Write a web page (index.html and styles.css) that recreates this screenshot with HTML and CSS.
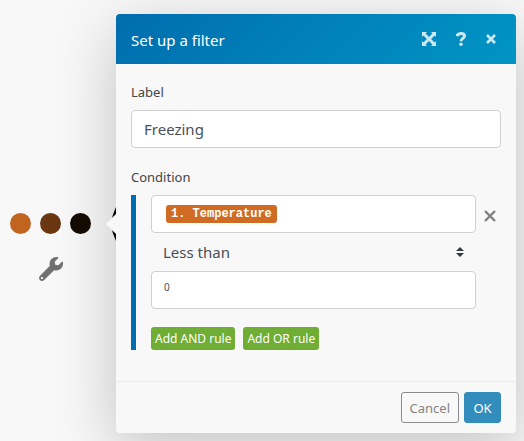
FILE: index.html
```html
<!DOCTYPE html>
<html lang="en">
<head>
<meta charset="utf-8">
<title>Set up a filter</title>
<link rel="stylesheet" href="styles.css">
</head>
<body>
<main class="scene">
  <div class="route">
    <div class="dots">
      <span class="dot dot-light"></span>
      <span class="dot dot-mid"></span>
      <span class="dot dot-dark"></span>
    </div>
    <svg class="wrench" viewBox="0 0 512 512" aria-hidden="true"><path d="M507.7 109.1c-2.2-9-13.5-12.1-20.1-5.5l-74.4 74.4-67.9-11.3-11.3-67.9 74.4-74.4c6.6-6.6 3.4-17.9-5.7-20.2-47.4-11.7-99.6.9-136.6 37.9-39.6 39.6-50.5 97.1-34.1 147.2L18.7 402.8c-25 25-25 65.5 0 90.5s65.5 25 90.5 0l213.2-213.2c50.1 16.7 107.5 5.7 147.4-34.2 37.1-37.1 49.7-89.3 37.9-136.8zM64 472c-13.3 0-24-10.700-24-24 0-13.300 10.700-24 24-24s24 10.700 24 24c0 13.300-10.700 24-24 24z"/></svg>
  </div>
  <form class="panel">
    <svg class="pointer" viewBox="0 0 10 36" aria-hidden="true"><path class="module" d="M10 1Q6 9 5 18Q6 27 10 35Z"/><path class="tip" d="M10 8L0 18L10 28Z"/></svg>
    <header class="head">
      <h1>Set up a filter</h1>
      <button type="button" class="tool" aria-label="Expand"><svg width="14" height="14" viewBox="0 0 14 14"><path d="M0 0H5L3.600 1.400L7 4.900L10.400 1.400L9 0H14V5L12.600 3.600L9.100 7L12.600 10.400L14 9V14H9L10.400 12.600L7 9.100L3.600 12.600L5 14H0V9L1.400 10.400L4.900 7L1.400 3.600L0 5Z"/></svg></button>
      <button type="button" class="tool" aria-label="Help"><svg width="10" height="14" viewBox="0 0 10 14"><path class="stroke thick" d="M1 4.200C1.500 2.200 3.200 1.500 5 1.500C7.300 1.500 8.500 2.700 8.500 4.100C8.500 6.500 5 6.300 5 9.200"/><circle cx="5" cy="12.200" r="1.800"/></svg></button>
      <button type="button" class="tool" aria-label="Close"><svg width="10" height="10" viewBox="0 0 10 10"><path class="stroke" d="M1 1L9 9M9 1L1 9"/></svg></button>
    </header>
    <div class="body">
      <label class="caption" for="name">Label</label>
      <input class="field" id="name" type="text" value="Freezing">
      <div class="caption caption-next" id="condition">Condition</div>
      <div class="rules" role="group" aria-labelledby="condition">
        <div class="rule">
          <div class="operands">
            <div class="field expression"><span class="pill">1. Temperature</span></div>
            <div class="choice">
              <select aria-label="Operator"><option>Less than</option></select>
              <svg class="arrows" width="8" height="10" viewBox="0 0 8 10" aria-hidden="true"><path d="M0 4L4 0L8 4ZM0 6H8L4 10Z"/></svg>
            </div>
            <textarea class="field value" rows="1" aria-label="Value">0</textarea>
          </div>
          <button type="button" class="remove" aria-label="Remove rule"><svg width="12" height="12" viewBox="0 0 12 12"><path d="M1 1L11 11M11 1L1 11"/></svg></button>
        </div>
        <div class="adders">
          <button type="button" class="add">Add AND rule</button>
          <button type="button" class="add">Add OR rule</button>
        </div>
      </div>
    </div>
    <footer class="foot">
      <button type="button" class="btn btn-cancel">Cancel</button>
      <button type="button" class="btn btn-ok">OK</button>
    </footer>
  </form>
</main>
</body>
</html>
```
FILE: styles.css
```css
* { box-sizing: border-box; }
body {
  margin: 0;
  overflow: hidden;
  background: #f8f8f8;
  color: #495057;
  font-family: "Segoe UI", "Noto Sans", "Open Sans", sans-serif;
}
button { margin: 0; font-family: inherit; cursor: pointer; }

.scene {
  display: flex;
  align-items: flex-start;
  min-height: 100vh;
  padding: 14px 8px 8px 10px;
}
.route { flex: 0 0 106px; padding-top: 199px; }
.dots { display: flex; gap: 9px; }
.dot { width: 21px; height: 21px; border-radius: 50%; }
.dot-light { background: #c06420; }
.dot-mid { background: #6b3712; }
.dot-dark { background: #140b02; }
.wrench { display: block; width: 24px; height: 24px; margin: 23px 0 0 29px; fill: #707070; }

.panel {
  position: relative;
  flex: 1;
  min-width: 0;
  border-radius: 4px;
  background: #f8f8f8;
  box-shadow: 0 16px 64px rgba(0, 0, 0, 0.22);
}
.pointer { position: absolute; left: -10px; top: 192px; width: 10px; height: 36px; }
.module { fill: #000; }
.tip { fill: #f8f8f8; }

.head {
  display: flex;
  align-items: center;
  height: 50px;
  padding: 0 20px 0 15px;
  border-radius: 4px 4px 0 0;
  background: linear-gradient(135deg, #006dae, #0095c5);
}
.head h1 { flex: 1; margin: 0; padding-top: 2px; color: #fff; font-size: 15px; line-height: 22px; font-weight: 400; }
.tool { display: flex; margin-left: 20px; padding: 0; border: 0; background: none; fill: #cce9f3; }
.stroke { fill: none; stroke: #cce9f3; stroke-width: 2.6; }
.thick { stroke-width: 3; }

.body { padding: 18px 15px 31px; }
.caption { display: block; margin-bottom: 8px; color: #444; font-size: 13px; line-height: 20px; }
.caption-next { margin-top: 19px; }
.field {
  display: block;
  width: 100%;
  height: 38px;
  padding: 0 12px;
  border: 1px solid #ced0d2;
  border-radius: 4px;
  background: #fff;
  color: #495057;
  font-family: inherit;
  font-size: 15px;
}
.rules { padding-left: 15px; border-left: 5px solid #006dae; }
.rule { display: flex; align-items: flex-start; }
.operands { flex: 1; min-width: 0; }
.expression { display: flex; align-items: center; padding-left: 14px; }
.pill {
  padding: 0 5px;
  border-radius: 3px;
  background: #d06b23;
  color: #fff;
  font: 700 12px/18px "Courier New", "Liberation Mono", monospace;
}
.choice { position: relative; }
.choice select {
  display: block;
  width: 100%;
  height: 38px;
  padding: 0 12px;
  border: 0;
  appearance: none;
  background: none;
  color: #495057;
  font-family: inherit;
  font-size: 15px;
}
.arrows { position: absolute; right: 12px; top: 14px; fill: #343a40; pointer-events: none; }
.value { padding: 7px 12px; resize: none; overflow: hidden; font-size: 10px; line-height: 16px; }
.remove { width: 25px; height: 38px; padding: 4px 0 0 8px; border: 0; background: none; }
.remove svg { display: block; fill: none; stroke: #808080; stroke-width: 2.4; }
.adders { display: flex; gap: 8px; padding-top: 18px; }
.add {
  padding: 0 4px;
  border: 0;
  border-radius: 3px;
  background: #70ad34;
  color: #fff;
  font-size: 12px;
  line-height: 23px;
}

.foot {
  display: flex;
  justify-content: flex-end;
  gap: 5px;
  padding: 10px 15px;
  border-top: 1px solid #ececec;
}
.btn { height: 31px; min-width: 37px; padding: 0 8px; border: 1px solid #8a8a8a; border-radius: 3px; font-size: 13px; }
.btn-cancel { background: transparent; color: #858585; }
.btn-ok { border-color: #328dbd; background: #328dbd; color: #fff; }
```
